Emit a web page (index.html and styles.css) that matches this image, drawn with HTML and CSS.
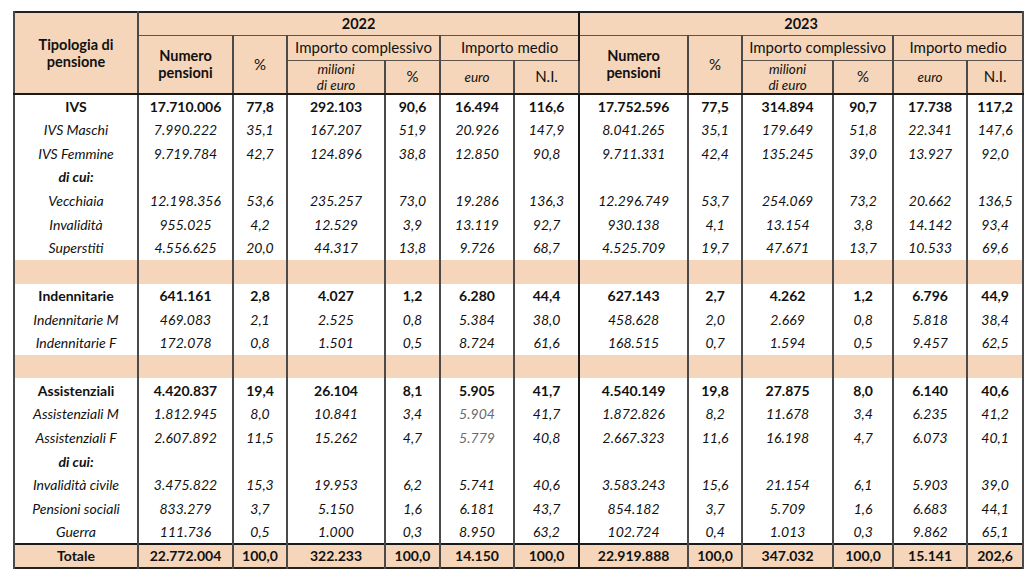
FILE: index.html
```html
<!DOCTYPE html>
<html lang="it">
<head>
    <meta charset="UTF-8">
    <meta name="viewport" content="width=device-width, initial-scale=1.0">
    <link rel="stylesheet" href="styles.css">
    <title>Pensioni 2022-2023</title>
</head>
<body>
<table class="pensions">
    <colgroup>
        <col class="c-type">
        <col class="c-num"><col class="c-pct"><col class="c-mil"><col class="c-pct2"><col class="c-euro"><col class="c-ni">
        <col class="c-num2"><col class="c-pct"><col class="c-mil2"><col class="c-pct3"><col class="c-euro"><col class="c-ni2">
    </colgroup>
    <thead>
        <tr class="h-year">
            <th rowspan="3" class="bold">Tipologia di<br>pensione</th>
            <th colspan="6" class="bold year">2022</th>
            <th colspan="6" class="bold">2023</th>
        </tr>
        <tr class="h-group">
            <th rowspan="2" class="bold">Numero<br>pensioni</th>
            <th rowspan="2">%</th>
            <th colspan="2">Importo complessivo</th>
            <th colspan="2" class="year">Importo medio</th>
            <th rowspan="2" class="bold">Numero<br>pensioni</th>
            <th rowspan="2">%</th>
            <th colspan="2">Importo complessivo</th>
            <th colspan="2">Importo medio</th>
        </tr>
        <tr class="h-unit">
            <th class="unit">milioni<br>di euro</th>
            <th>%</th>
            <th class="unit">euro</th>
            <th class="year">N.I.</th>
            <th class="unit">milioni<br>di euro</th>
            <th>%</th>
            <th class="unit">euro</th>
            <th>N.I.</th>
        </tr>
    </thead>
    <tbody>
        <tr class="main">
            <td>IVS</td><td>17.710.006</td><td>77,8</td><td>292.103</td><td>90,6</td><td>16.494</td><td class="year">116,6</td>
            <td>17.752.596</td><td>77,5</td><td>314.894</td><td>90,7</td><td>17.738</td><td>117,2</td>
        </tr>
        <tr class="sub">
            <td>IVS Maschi</td><td>7.990.222</td><td>35,1</td><td>167.207</td><td>51,9</td><td>20.926</td><td class="year">147,9</td>
            <td>8.041.265</td><td>35,1</td><td>179.649</td><td>51,8</td><td>22.341</td><td>147,6</td>
        </tr>
        <tr class="sub">
            <td>IVS Femmine</td><td>9.719.784</td><td>42,7</td><td>124.896</td><td>38,8</td><td>12.850</td><td class="year">90,8</td>
            <td>9.711.331</td><td>42,4</td><td>135.245</td><td>39,0</td><td>13.927</td><td>92,0</td>
        </tr>
        <tr class="sub">
            <td class="of-which">di cui:</td><td></td><td></td><td></td><td></td><td></td><td class="year"></td>
            <td></td><td></td><td></td><td></td><td></td><td></td>
        </tr>
        <tr class="sub">
            <td>Vecchiaia</td><td>12.198.356</td><td>53,6</td><td>235.257</td><td>73,0</td><td>19.286</td><td class="year">136,3</td>
            <td>12.296.749</td><td>53,7</td><td>254.069</td><td>73,2</td><td>20.662</td><td>136,5</td>
        </tr>
        <tr class="sub">
            <td>Invalidità</td><td>955.025</td><td>4,2</td><td>12.529</td><td>3,9</td><td>13.119</td><td class="year">92,7</td>
            <td>930.138</td><td>4,1</td><td>13.154</td><td>3,8</td><td>14.142</td><td>93,4</td>
        </tr>
        <tr class="sub">
            <td>Superstiti</td><td>4.556.625</td><td>20,0</td><td>44.317</td><td>13,8</td><td>9.726</td><td class="year">68,7</td>
            <td>4.525.709</td><td>19,7</td><td>47.671</td><td>13,7</td><td>10.533</td><td>69,6</td>
        </tr>
        <tr class="band">
            <td></td><td></td><td></td><td></td><td></td><td></td><td class="year"></td>
            <td></td><td></td><td></td><td></td><td></td><td></td>
        </tr>
        <tr class="main">
            <td>Indennitarie</td><td>641.161</td><td>2,8</td><td>4.027</td><td>1,2</td><td>6.280</td><td class="year">44,4</td>
            <td>627.143</td><td>2,7</td><td>4.262</td><td>1,2</td><td>6.796</td><td>44,9</td>
        </tr>
        <tr class="sub">
            <td>Indennitarie M</td><td>469.083</td><td>2,1</td><td>2.525</td><td>0,8</td><td>5.384</td><td class="year">38,0</td>
            <td>458.628</td><td>2,0</td><td>2.669</td><td>0,8</td><td>5.818</td><td>38,4</td>
        </tr>
        <tr class="sub">
            <td>Indennitarie F</td><td>172.078</td><td>0,8</td><td>1.501</td><td>0,5</td><td>8.724</td><td class="year">61,6</td>
            <td>168.515</td><td>0,7</td><td>1.594</td><td>0,5</td><td>9.457</td><td>62,5</td>
        </tr>
        <tr class="band">
            <td></td><td></td><td></td><td></td><td></td><td></td><td class="year"></td>
            <td></td><td></td><td></td><td></td><td></td><td></td>
        </tr>
        <tr class="main">
            <td>Assistenziali</td><td>4.420.837</td><td>19,4</td><td>26.104</td><td>8,1</td><td>5.905</td><td class="year">41,7</td>
            <td>4.540.149</td><td>19,8</td><td>27.875</td><td>8,0</td><td>6.140</td><td>40,6</td>
        </tr>
        <tr class="sub">
            <td>Assistenziali M</td><td>1.812.945</td><td>8,0</td><td>10.841</td><td>3,4</td><td class="muted">5.904</td><td class="year">41,7</td>
            <td>1.872.826</td><td>8,2</td><td>11.678</td><td>3,4</td><td>6.235</td><td>41,2</td>
        </tr>
        <tr class="sub">
            <td>Assistenziali F</td><td>2.607.892</td><td>11,5</td><td>15.262</td><td>4,7</td><td class="muted">5.779</td><td class="year">40,8</td>
            <td>2.667.323</td><td>11,6</td><td>16.198</td><td>4,7</td><td>6.073</td><td>40,1</td>
        </tr>
        <tr class="sub">
            <td class="of-which">di cui:</td><td></td><td></td><td></td><td></td><td></td><td class="year"></td>
            <td></td><td></td><td></td><td></td><td></td><td></td>
        </tr>
        <tr class="sub">
            <td>Invalidità civile</td><td>3.475.822</td><td>15,3</td><td>19.953</td><td>6,2</td><td>5.741</td><td class="year">40,6</td>
            <td>3.583.243</td><td>15,6</td><td>21.154</td><td>6,1</td><td>5.903</td><td>39,0</td>
        </tr>
        <tr class="sub">
            <td>Pensioni sociali</td><td>833.279</td><td>3,7</td><td>5.150</td><td>1,6</td><td>6.181</td><td class="year">43,7</td>
            <td>854.182</td><td>3,7</td><td>5.709</td><td>1,6</td><td>6.683</td><td>44,1</td>
        </tr>
        <tr class="sub">
            <td>Guerra</td><td>111.736</td><td>0,5</td><td>1.000</td><td>0,3</td><td>8.950</td><td class="year">63,2</td>
            <td>102.724</td><td>0,4</td><td>1.013</td><td>0,3</td><td>9.862</td><td>65,1</td>
        </tr>
        <tr class="total">
            <td>Totale</td><td>22.772.004</td><td>100,0</td><td>322.233</td><td>100,0</td><td>14.150</td><td class="year">100,0</td>
            <td>22.919.888</td><td>100,0</td><td>347.032</td><td>100,0</td><td>15.141</td><td>202,6</td>
        </tr>
    </tbody>
</table>
</body>
</html>
```
FILE: styles.css
```css
body {
    margin: 11px 0 0 13px;
    font-family: Lato, "Open Sans", sans-serif;
    color: #111;
    background: #fff;
}

.pensions {
    width: 1000px;
    table-layout: fixed;
    border-collapse: collapse;
    border: 2px solid #222;
    font-size: 14px;
}

.c-type { width: 124px; }
.c-num { width: 95px; }
.c-pct { width: 54px; }
.c-mil { width: 98px; }
.c-pct2 { width: 55px; }
.c-euro { width: 74px; }
.c-ni { width: 65px; }
.c-num2 { width: 109px; }
.c-mil2 { width: 91px; }
.c-pct3 { width: 60px; }
.c-ni2 { width: 56px; }

th, td {
    padding: 0 2px;
    text-align: center;
    vertical-align: middle;
    border-left: 2px solid #4a4a4a;
    border-right: 2px solid #4a4a4a;
    white-space: nowrap;
}

.year {
    border-right-color: #1a1a1a;
}

/* header */
thead th {
    background-color: #f6d6ba;
    font-weight: normal;
    font-size: 15px;
    border-top: 1px solid #5e544c;
    border-bottom: 1px solid #5e544c;
    line-height: 17px;
}

thead th.bold {
    font-weight: bold;
    font-size: 14.5px;
}

thead th.unit {
    font-style: italic;
    font-size: 13.5px;
    line-height: 16px;
}

.h-year { height: 23px; }
.h-group { height: 25px; }
.h-unit { height: 34px; }

thead tr:last-child th,
thead th[rowspan] {
    border-bottom: 2px solid #1a1a1a;
}

/* body */
tbody tr {
    height: 23.7px;
}

.main td {
    font-weight: bold;
}

.sub td {
    font-style: italic;
}

.sub td.of-which {
    font-weight: bold;
}

.muted {
    color: #6b6b6b;
}

.band td {
    background-color: #f6d6ba;
}

.total td {
    background-color: #f6d6ba;
    font-weight: bold;
    border-top: 2px solid #1a1a1a;
    height: 21px;
}
```
